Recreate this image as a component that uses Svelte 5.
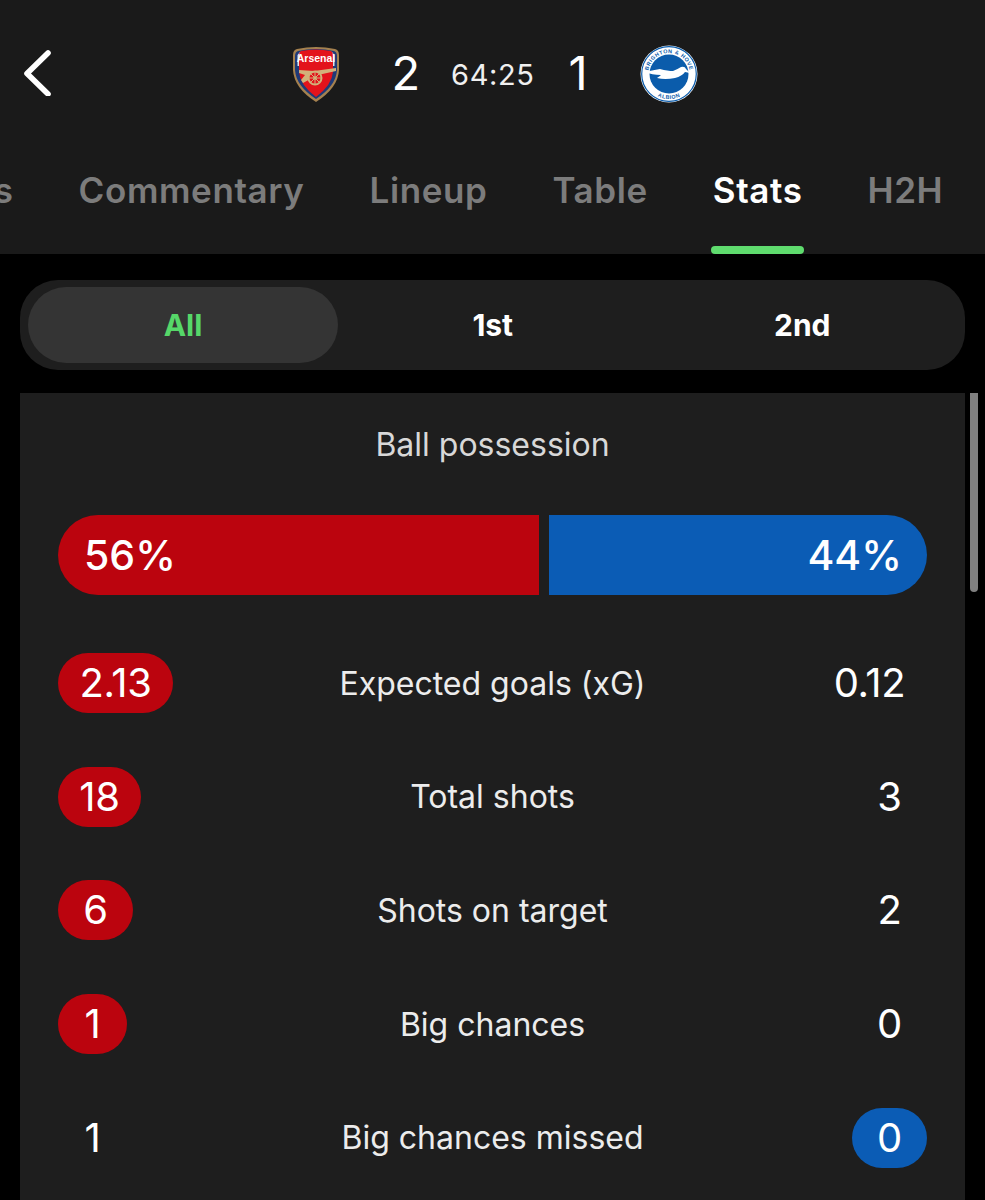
<script>
  const tabs = ['Events', 'Commentary', 'Lineup', 'Table', 'Stats', 'H2H'];
  const stats = [
    { label: 'Expected goals (xG)', home: '2.13', away: '0.12', win: 'home', hw: 115, aw: 115 },
    { label: 'Total shots', home: '18', away: '3', win: 'home', hw: 83, aw: 75 },
    { label: 'Shots on target', home: '6', away: '2', win: 'home', hw: 75, aw: 75 },
    { label: 'Big chances', home: '1', away: '0', win: 'home', hw: 69, aw: 75 },
    { label: 'Big chances missed', home: '1', away: '0', win: 'away', hw: 69, aw: 75 }
  ];
</script>

<div class="page">
  <header>
    <div class="top">
      <svg class="back" width="30" height="46" viewBox="0 0 30 46" fill="none" stroke="#fff" stroke-width="5.6" stroke-linecap="round" stroke-linejoin="round"><path d="M26 3 L5 23.5 L26 44"/></svg>
      <div class="score">
        <svg class="crest" width="48" height="56" viewBox="0 0 48 56">
          <path d="M5 3 Q24 -1 43 3 Q47 4 47 9 L47 24 Q46 42 24 56 Q2 42 1 24 L1 9 Q1 4 5 3Z" fill="#a5814f"/>
          <path d="M6 5 Q24 1 42 5 Q45 6 45 10 L45 24 Q44 40 24 53 Q4 40 3 24 L3 10 Q3 6 6 5Z" fill="#1e3a78"/>
          <path d="M8 6 Q24 3 40 6 L42.5 9 L42.5 20 L41 20 L41 9 L7 9 L7 20 L5.5 20 L5.5 9Z" fill="#dfe3ea"/>
          <path d="M9 5 Q24 2 39 5 Q41 6 41 10 L41 26 Q40 39 24 51 Q8 39 7 26 L7 10 Q7 6 9 5Z" fill="#e3131b"/>
          <text x="24" y="16" text-anchor="middle" class="crest-name">Arsenal</text>
          <path d="M7 24 L22 25 L44 22 L44 25 L26 29 L22 31 L11 37 L9 34 L13 29 L7 27Z" fill="#d2b27a"/>
          <circle cx="23" cy="32" r="6.5" fill="#e3131b" stroke="#d2b27a" stroke-width="2"/>
          <path d="M23 26 V38 M17 32 H29 M19 28 L27 36 M27 28 L19 36" stroke="#d2b27a" stroke-width="1"/>
          <circle cx="23" cy="32" r="1.8" fill="#d2b27a"/>
        </svg>
        <span class="goal g1">2</span>
        <span class="clock">64:25</span>
        <span class="goal g2">1</span>
        <svg class="badge" width="58" height="58" viewBox="0 0 58 58">
          <circle cx="29" cy="29" r="28.5" fill="#fff"/>
          <circle cx="29" cy="29" r="27.3" fill="none" stroke="#0b5cab" stroke-width="1.2"/>
          <circle cx="29" cy="29" r="19.5" fill="#0b5cab"/>
          <path d="M5 27 Q14 25 20 24 Q28 26 33 26 Q38 24 41 22 Q45 21 46 24 L50 28 L45 27 Q42 31 35 33 Q25 35 17 33 Q20 31 21 30 Q12 30 5 27Z" fill="#fff"/>
          <defs>
            <path id="arcTop" d="M8 29 A21 21 0 0 1 50 29"/>
            <path id="arcBot" d="M4 29 A25 25 0 0 0 54 29"/>
          </defs>
          <text class="badge-t"><textPath href="#arcTop" startOffset="50%" text-anchor="middle">BRIGHTON &amp; HOVE</textPath></text>
          <text class="badge-t"><textPath href="#arcBot" startOffset="50%" text-anchor="middle">ALBION</textPath></text>
        </svg>
      </div>
    </div>
    <nav>
      {#each tabs as t}
        <div class="tab" class:active={t === 'Stats'}>{t}</div>
      {/each}
    </nav>
  </header>

  <div class="segment">
    <div class="seg on">All</div>
    <div class="seg">1st</div>
    <div class="seg">2nd</div>
  </div>

  <main>
    <div class="thumb"></div>
    <section class="card">
      <h2>Ball possession</h2>
      <div class="bar">
        <div class="left">56%</div>
        <div class="right">44%</div>
      </div>
      {#each stats as s}
        <div class="row">
          <div class="val home" class:pill={s.win === 'home'} style="width: {s.hw}px">{s.home}</div>
          <div class="label">{s.label}</div>
          <div class="end"><div class="val away" class:pill={s.win === 'away'} style="width: {s.aw}px">{s.away}</div></div>
        </div>
      {/each}
    </section>
  </main>
</div>

<style>
  :global(body) { margin: 0; background: #000; }
  .page {
    width: 985px;
    height: 1200px;
    overflow: hidden;
    background: #000;
    color: #fff;
    font-family: Inter, "Liberation Sans", sans-serif;
  }
  header { height: 254px; background: #1a1a1a; display: flex; flex-direction: column; }
  .top { position: relative; height: 148px; display: flex; justify-content: center; }
  .back { position: absolute; left: 22px; top: 50px; }
  .score { display: flex; align-items: center; height: 148px; padding-left: 5px; }
  .crest { margin-right: 51px; }
  .crest-name { font: 700 10.5px "Liberation Sans", sans-serif; fill: #fff; }
  .goal { font-size: 47px; font-weight: 400; line-height: 1; margin-top: -3px; }
  .clock { font-size: 29px; margin: 0 34px 0 31px; letter-spacing: .6px; color: #f0f0f0; }
  .badge { margin-left: 52px; }
  .badge-t { font: 700 5.4px "Liberation Sans", sans-serif; fill: #0b5cab; letter-spacing: .5px; }
  nav {
    display: flex;
    gap: 65px;
    margin-left: -104.5px;
    white-space: nowrap;
    font-size: 35px;
    letter-spacing: .6px;
    font-weight: 600;
    color: #7c7c7c;
    flex: 1;
  }
  .tab { position: relative; height: 106px; line-height: 85px; }
  .tab.active { color: #fff; }
  .tab.active::after {
    content: "";
    position: absolute;
    left: -1.5px;
    right: -1.5px;
    bottom: 0;
    height: 8px;
    background: #5fdc6e;
    border-radius: 4px;
  }
  .segment {
    margin: 26px 20px 23px;
    height: 90px;
    box-sizing: border-box;
    padding: 7px 8px;
    background: #1e1e1e;
    border-radius: 38px;
    display: grid;
    grid-template-columns: 310px 1fr 1fr;
    font-size: 30px;
    font-weight: 700;
  }
  .seg { display: flex; align-items: center; justify-content: center; border-radius: 38px; }
  .seg.on { background: #343434; color: #56d769; }
  main { position: relative; margin: 0 20px; }
  .thumb {
    position: absolute;
    right: -13px;
    top: 0;
    width: 8px;
    height: 199px;
    background: #808080;
    border-radius: 0 0 4px 4px;
  }
  .card {
    background: #1e1e1e;
    padding: 0 38px;
    height: 807px;
    box-sizing: border-box;
  }
  h2 {
    margin: 0;
    padding-top: 33px;
    height: 122px;
    box-sizing: border-box;
    font-size: 32px;
    line-height: 38px;
    font-weight: 400;
    color: #d8d8d8;
    text-align: center;
  }
  .bar { display: flex; gap: 10px; height: 80px; font-size: 41px; font-weight: 500; line-height: 80px; margin-bottom: 58px; }
  .left { width: 481px; box-sizing: border-box; background: #bb040e; border-radius: 40px 0 0 40px; padding-left: 26px; }
  .right { flex: 1; background: #0b5cb5; border-radius: 0 40px 40px 0; padding-right: 25px; text-align: right; }
  .row {
    display: grid;
    grid-template-columns: 1fr auto 1fr;
    align-items: center;
    height: 60px;
    margin-bottom: 53.7px;
  }
  .label { font-size: 32px; text-align: center; color: #ececec; white-space: nowrap; }
  .val {
    font-size: 40px;
    font-weight: 400;
    line-height: 60px;
    height: 60px;
    box-sizing: border-box;
    text-align: center;
    border-radius: 30px;
    letter-spacing: -.3px;
  }
  .home.pill { background: #bb040e; }
  .away.pill { background: #0b5cb5; }
  .end { display: flex; justify-content: flex-end; }
</style>
